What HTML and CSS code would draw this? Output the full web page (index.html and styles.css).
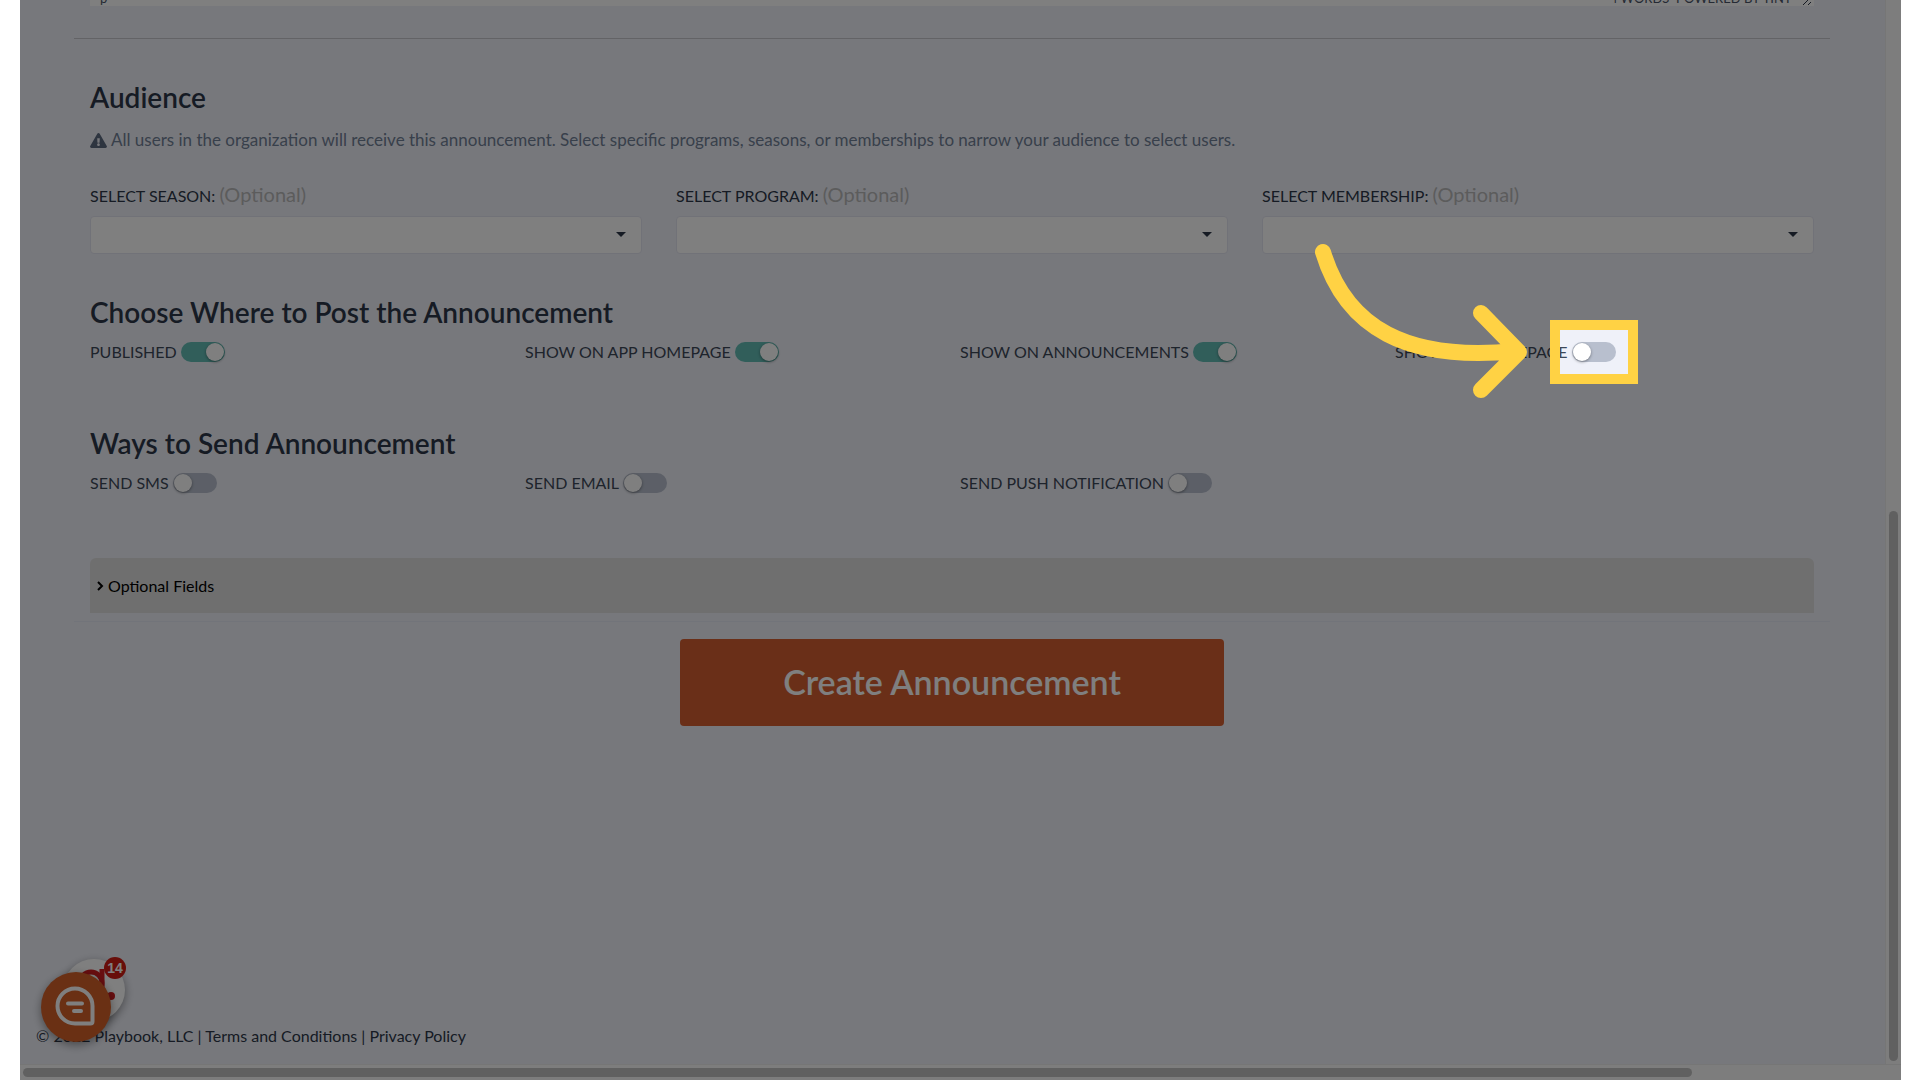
FILE: index.html
```html
<!DOCTYPE html>
<html lang="en">
<head>
<meta charset="utf-8">
<meta name="viewport" content="width=device-width, initial-scale=1">
<title>Create Announcement</title>
<link rel="stylesheet" href="styles.css">
</head>
<body>
<div class="frame">
  <main class="main">
    <div class="editor">
      <div class="editor-status">
        <span>p</span>
        <span class="editor-right">4 WORDS &nbsp;POWERED BY TINY
          <svg class="grip" width="10" height="10" viewBox="0 0 10 10" aria-hidden="true"><path d="M1 9 9 1M6 9l3-3"/></svg>
        </span>
      </div>
    </div>

    <form class="form">
      <section class="section audience">
        <h2>Audience</h2>
        <p class="notice">
          <svg class="warn" width="17" height="15" viewBox="0 0 576 512" aria-hidden="true"><path fill-rule="evenodd" d="M569.500 440C588 472 564.800 512 527.900 512H48.100c-36.900 0-60-40.100-41.600-72L246.400 24c18.500-32 64.700-32 83.200 0l239.900 416zM288 354c-25.400 0-46 20.600-46 46s20.600 46 46 46 46-20.600 46-46-20.600-46-46-46zm-43.700-165.300 7.400 136c.4 6.400 5.600 11.300 12 11.300h48.500c6.400 0 11.600-5 12-11.300l7.400-136c.4-6.900-5.100-12.700-12-12.700h-63.400c-6.900 0-12.300 5.800-11.900 12.700z"/></svg>
          All users in the organization will receive this announcement. Select specific programs, seasons, or memberships to narrow your audience to select users.
        </p>
        <div class="selects">
          <div class="field">
            <label for="season">SELECT SEASON: <span class="optional">(Optional)</span></label>
            <div class="select"><select id="season"><option></option></select></div>
          </div>
          <div class="field">
            <label for="program">SELECT PROGRAM: <span class="optional">(Optional)</span></label>
            <div class="select"><select id="program"><option></option></select></div>
          </div>
          <div class="field">
            <label for="membership">SELECT MEMBERSHIP: <span class="optional">(Optional)</span></label>
            <div class="select"><select id="membership"><option></option></select></div>
          </div>
        </div>
      </section>

      <section class="section where">
        <h2>Choose Where to Post the Announcement</h2>
        <div class="toggles">
          <label class="toggle">PUBLISHED <input type="checkbox" checked></label>
          <label class="toggle">SHOW ON APP HOMEPAGE <input type="checkbox" checked></label>
          <label class="toggle">SHOW ON ANNOUNCEMENTS <input type="checkbox" checked></label>
          <label class="toggle">SHOW ON HOMEPAGE
            <span class="target">
              <input type="checkbox">
              <span class="spotlight"></span>
              <svg class="arrow" width="226" height="170" viewBox="0 0 226 170" aria-hidden="true"><path d="M13 13C36 89 97 123 206 112M171 74l38 39-38 38"/></svg>
            </span>
          </label>
        </div>
      </section>

      <section class="section ways">
        <h2>Ways to Send Announcement</h2>
        <div class="toggles">
          <label class="toggle">SEND SMS <input type="checkbox"></label>
          <label class="toggle">SEND EMAIL <input type="checkbox"></label>
          <label class="toggle">SEND PUSH NOTIFICATION <input type="checkbox"></label>
        </div>
      </section>

      <div class="section extra">
        <details>
          <summary><svg width="8" height="10" viewBox="0 0 8 10" aria-hidden="true"><path d="M2 1l4 4-4 4"/></svg>Optional Fields</summary>
        </details>
      </div>

      <div class="actions"><button class="submit" type="button">Create Announcement</button></div>
    </form>

    <footer class="footer">© 2022 Playbook, LLC | <a href="#terms">Terms and Conditions</a> | <a href="#privacy">Privacy Policy</a></footer>
  </main>

  <div class="track track-y"><div class="thumb"></div></div>
  <div class="track track-x"><div class="thumb"></div></div>

  <div class="widgets">
    <button class="news" type="button" aria-label="Updates">
      <svg width="62" height="62" viewBox="0 0 62 62" aria-hidden="true"><circle class="bowl" cx="28" cy="24" r="11"/><path class="bowl" d="M39 10v26"/><circle class="dot" cx="48" cy="37" r="4"/></svg>
    </button>
    <span class="badge">14</span>
    <button class="chat" type="button" aria-label="Open chat">
      <svg width="70" height="70" viewBox="0 0 70 70" aria-hidden="true"><path d="M34 16.500a17.500 17.500 0 0 0 0 35h15.500a2 2 0 0 0 2-2V34A17.500 17.500 0 0 0 34 16.500zM27 31.500h14M33 39h7"/></svg>
    </button>
  </div>
</div>
</body>
</html>
```
FILE: styles.css
```css
* { box-sizing: border-box; }

body {
  margin: 0;
  background: #fff;
  color: #2d3748;
  font: 16px/24px Lato, "Open Sans", sans-serif;
}

.frame {
  position: relative;
  display: grid;
  grid-template-columns: 1fr 16px;
  grid-template-rows: 1fr 16px;
  min-height: 100vh;
  margin: 0 19px 0 20px;
  overflow: hidden;
  background: #eff1f9;
}

.main {
  display: flex;
  flex-direction: column;
  min-width: 0;
}

/* Bottom edge of the message editor, scrolled mostly out of view */
.editor {
  margin: 0 71px 0 70px;
  background: #fff;
}

.editor-status {
  display: flex;
  justify-content: space-between;
  margin-top: -10px;
  padding: 0 2px 0 10px;
  color: #4a5568;
  font-size: 13px;
  line-height: 16px;
}

.editor-right { display: flex; gap: 10px; align-items: flex-end; }

.grip { fill: none; stroke: #2d3748; stroke-width: 1; }

.form {
  margin: 32px 55px 0 54px;
  border-top: 1px solid #c6c7cc;
}

.section { padding: 0 16px; }

h2 {
  margin: 0;
  color: #2d3748;
  font-size: 28px;
  font-weight: 600;
  line-height: 34px;
}

.audience { padding-top: 41px; }

.notice {
  display: flex;
  gap: 4px;
  align-items: center;
  margin: 14px 0 30px;
  color: #718096;
  font-size: 17px;
}

.warn { flex: none; fill: #5c6a80; }

.selects {
  display: grid;
  grid-template-columns: repeat(3, 1fr);
  gap: 34px;
}

.field { display: flex; flex-direction: column; gap: 8px; }

.field label { line-height: 25px; }

.optional { color: #b8b8b8; font-size: 20px; }

.select { position: relative; }

.select::after {
  content: "";
  position: absolute;
  top: 16px;
  right: 16px;
  border: 5px solid transparent;
  border-top-color: #2d3748;
  border-bottom: 0;
  pointer-events: none;
}

select {
  display: block;
  width: 100%;
  height: 38px;
  padding: 0 40px 0 12px;
  appearance: none;
  border: 1px solid #e2e4f0;
  border-radius: 4px;
  background: #fff;
  font: inherit;
}

.where { padding-top: 41px; }
.ways { padding-top: 62px; }

.toggles {
  display: grid;
  grid-template-columns: repeat(4, 1fr);
  gap: 16px;
  margin-top: 11px;
}

.toggle { display: flex; gap: 4px; align-items: center; color: #3d4858; }

.toggle input {
  display: block;
  width: 44px;
  height: 20px;
  margin: 0;
  padding: 1px;
  appearance: none;
  border-radius: 10px;
  background: #b8bfce;
}

.toggle input::before {
  content: "";
  display: block;
  width: 18px;
  height: 18px;
  border-radius: 50%;
  background: #fff;
  box-shadow: 0 1px 3px rgba(0, 0, 0, .4);
}

.toggle input:checked { background: #62bcb5; }
.toggle input:checked::before { margin-left: 24px; }

/* Tour step: dims the frame around the highlighted switch */
.target { position: relative; }

.spotlight {
  position: absolute;
  z-index: 10;
  inset: -22px;
  border: 10px solid #ffd244;
  box-shadow: 0 0 0 3000px rgba(0, 0, 0, .5);
  pointer-events: none;
}

.arrow {
  position: absolute;
  z-index: 11;
  top: -103px;
  right: 80px;
  fill: none;
  stroke: #ffd244;
  stroke-width: 16;
  stroke-linecap: round;
  stroke-linejoin: round;
  pointer-events: none;
}

.extra {
  padding-top: 63px;
  padding-bottom: 8px;
  border-bottom: 1px solid #e4e8f4;
}

summary {
  display: flex;
  gap: 4px;
  align-items: center;
  height: 55px;
  padding: 0 6px;
  border-radius: 6px 6px 0 0;
  background: #dedede;
  color: #000;
}

summary svg { fill: none; stroke: #000; stroke-width: 2; }

.actions { display: flex; justify-content: center; padding: 17px 0; }

.submit {
  width: 31%;
  padding: 21px 0 23px;
  border: 0;
  border-radius: 4px;
  background: #d45f30;
  color: #fff;
  font: 600 34px/43px Lato, "Open Sans", sans-serif;
}

.footer { margin-top: auto; padding: 0 16px 16px; }
.footer a { color: inherit; text-decoration: none; }

.track { display: flex; background: #fafafa; }

.track-y {
  align-items: flex-end;
  padding: 3px;
  border-left: 1px solid #ececec;
}

.track-y .thumb { width: 100%; height: 52%; }

.track-x {
  grid-column: 1 / -1;
  padding: 3px;
  border-top: 1px solid #ececec;
}

.track-x .thumb { width: 89%; }

.thumb { border-radius: 5px; background: #c1c1c1; }

/* Floating buttons in the bottom left corner */
.widgets {
  position: absolute;
  bottom: 38px;
  left: 21px;
  width: 85px;
  height: 85px;
}

.news,
.chat {
  position: absolute;
  padding: 0;
  border: 0;
  border-radius: 50%;
  box-shadow: 0 3px 10px rgba(0, 0, 0, .4);
}

.news { top: 2px; right: 1px; background: #fff; }
.chat { bottom: 0; left: 0; background: #d46028; }
.news svg, .chat svg { display: block; }
.bowl { fill: none; stroke: #d01c20; stroke-width: 5; }
.dot { fill: #d01c20; }

.chat path {
  fill: none;
  stroke: #fff;
  stroke-width: 4;
  stroke-linecap: round;
}

.badge {
  position: absolute;
  top: 0;
  right: 0;
  width: 22px;
  border-radius: 11px;
  background: #d01c14;
  color: #fff;
  font: 700 14px/22px "Liberation Sans", sans-serif;
  text-align: center;
}
```
